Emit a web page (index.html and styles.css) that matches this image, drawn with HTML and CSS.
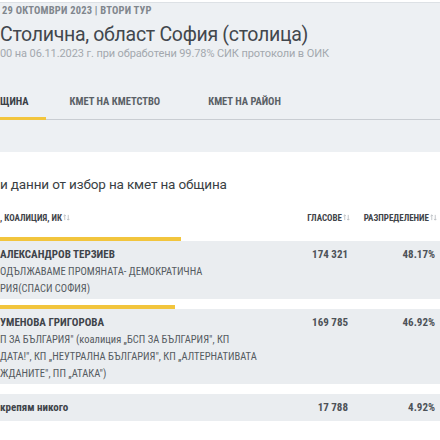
FILE: index.html
```html
<!DOCTYPE html>
<html lang="bg">
<head>
<meta charset="utf-8">
<link rel="stylesheet" href="styles.css">
</head>
<body>
<header class="hero">
  <div class="date">29 ОКТОМВРИ 2023 | ВТОРИ ТУР</div>
  <h1 class="title">Столична, област София (столица)</h1>
  <div class="sub">00 на 06.11.2023 г. при обработени 99.78% СИК протоколи в ОИК</div>
  <nav class="tabs">
    <span class="tab active">ЩИНА</span>
    <span class="tab">КМЕТ НА КМЕТСТВО</span>
    <span class="tab">КМЕТ НА РАЙОН</span>
  </nav>
</header>
<section class="results">
  <h2 class="heading">и данни от избор на кмет на община</h2>
  <div class="thead">
    <div class="th">, КОАЛИЦИЯ, ИК<svg class="sort" viewBox="0 0 8 8" width="7" height="7"><path d="M2 7V1M0.6 2.4L2 1l1.4 1.4M6 1v6M4.6 5.6L6 7l1.4-1.4" fill="none" stroke="#b4b8bd" stroke-width="0.9"/></svg></div>
    <div class="th num">ГЛАСОВЕ<svg class="sort" viewBox="0 0 8 8" width="7" height="7"><path d="M2 7V1M0.6 2.4L2 1l1.4 1.4M6 1v6M4.6 5.6L6 7l1.4-1.4" fill="none" stroke="#b4b8bd" stroke-width="0.9"/></svg></div>
    <div class="th num">РАЗПРЕДЕЛЕНИЕ<svg class="sort" viewBox="0 0 8 8" width="7" height="7"><path d="M2 7V1M0.6 2.4L2 1l1.4 1.4M6 1v6M4.6 5.6L6 7l1.4-1.4" fill="none" stroke="#b4b8bd" stroke-width="0.9"/></svg></div>
  </div>

  <div class="entry">
    <div class="bar" style="width:181px"></div>
    <div class="row">
      <div class="cand">
        <div class="name">АЛЕКСАНДРОВ ТЕРЗИЕВ</div>
        <div class="party">ОДЪЛЖАВАМЕ ПРОМЯНАТА- ДЕМОКРАТИЧНА<br>РИЯ(СПАСИ СОФИЯ)</div>
      </div>
      <div class="val">174 321</div>
      <div class="val">48.17%</div>
    </div>
  </div>

  <div class="entry">
    <div class="bar" style="width:175px"></div>
    <div class="row">
      <div class="cand">
        <div class="name">УМЕНОВА ГРИГОРОВА</div>
        <div class="party">П ЗА БЪЛГАРИЯ" (коалиция „БСП ЗА БЪЛГАРИЯ", КП<br>ДАТА!", КП „НЕУТРАЛНА БЪЛГАРИЯ", КП „АЛТЕРНАТИВАТА<br>ЖДАНИТЕ", ПП „АТАКА")</div>
      </div>
      <div class="val">169 785</div>
      <div class="val">46.92%</div>
    </div>
  </div>

  <div class="entry">
    <div class="bar" style="width:0px"></div>
    <div class="row single">
      <div class="cand">
        <div class="name">крепям никого</div>
      </div>
      <div class="val">17 788</div>
      <div class="val">4.92%</div>
    </div>
  </div>
</section>
</body>
</html>
```

FILE: styles.css
```css
* { box-sizing: border-box; }
html, body { margin: 0; padding: 0; background: #ffffff; }
body {
  font-family: Roboto, "Noto Sans", sans-serif;
  color: #3b4046;
  width: 440px;
  overflow: hidden;
}
.hero {
  margin-top: 2px;
  border-top: 1px solid #dde1e5;
  background: #edf0f3;
  padding: 2px 0 0 0;
  height: 150px;
}
.date {
  font-family: "Roboto Condensed", "Liberation Sans Narrow", "DejaVu Sans Condensed", Roboto, sans-serif;
  font-weight: 700;
  font-size: 10.5px;
  line-height: 12px;
  letter-spacing: 0.2px;
  color: #80868d;
  padding-left: 2px;
}
.title {
  margin: 6px 0 0 0;
  font-weight: 400;
  font-size: 19.5px;
  line-height: 24px;
  color: #42474d;
  letter-spacing: -0.3px;
}
.sub {
  margin-top: 0;
  font-size: 11px;
  line-height: 14px;
  color: #a3a8ae;
  letter-spacing: -0.1px;
}
.tabs {
  display: flex;
  margin-top: 35px;
  border-bottom: 1px solid #c9cdd2;
}
.tab {
  font-family: "Roboto Condensed", "Liberation Sans Narrow", "DejaVu Sans Condensed", Roboto, sans-serif;
  font-weight: 700;
  font-size: 10.5px;
  line-height: 12px;
  color: #5a6066;
  padding: 0 24px 9px 24px;
  border-bottom: 3px solid transparent;
  margin-bottom: -1px;
}
.tab.active {
  padding-left: 0;
  padding-right: 17px;
  color: #3b4046;
  border-bottom-color: #f2c53d;
}
.results { padding-top: 23px; }
.heading {
  margin: 0;
  font-weight: 400;
  font-size: 13.5px;
  line-height: 18px;
  color: #3a3f44;
  letter-spacing: -0.15px;
}
.thead {
  display: grid;
  grid-template-columns: 1fr 60px 87px;
  padding-right: 3px;
  margin-top: 20px;
  height: 24px;
}
.th {
  font-family: "Roboto Condensed", "Liberation Sans Narrow", "DejaVu Sans Condensed", Roboto, sans-serif;
  font-weight: 700;
  font-size: 9px;
  line-height: 10px;
  height: 10px;
  color: #3f4449;
  display: flex;
  align-items: center;
  gap: 1px;
}
.th.num { justify-content: flex-end; }
.sort { flex: none; margin-top: -2px; }
.entry { margin-bottom: 6px; }
.bar {
  height: 4px;
  background: #f2c53d;
}
.row {
  display: grid;
  grid-template-columns: 1fr 60px 87px;
  padding: 8px 5px 2px 0;
  background: #eaedf0;
  align-items: start;
}
.row.single { padding: 8px 5px 7px 0; }
.name {
  font-family: "Roboto Condensed", "Liberation Sans Narrow", "DejaVu Sans Condensed", Roboto, sans-serif;
  font-weight: 700;
  font-size: 11px;
  line-height: 12px;
  color: #3f444a;
}
.party {
  margin-top: 2px;
  font-family: "Roboto Condensed", "Liberation Sans Narrow", "DejaVu Sans Condensed", Roboto, sans-serif;
  font-size: 10.5px;
  line-height: 17px;
  color: #555b61;
}
.val {
  font-family: "Roboto Condensed", "Liberation Sans Narrow", "DejaVu Sans Condensed", Roboto, sans-serif;
  font-weight: 700;
  font-size: 11px;
  line-height: 12px;
  color: #4d5258;
  text-align: right;
}
```
